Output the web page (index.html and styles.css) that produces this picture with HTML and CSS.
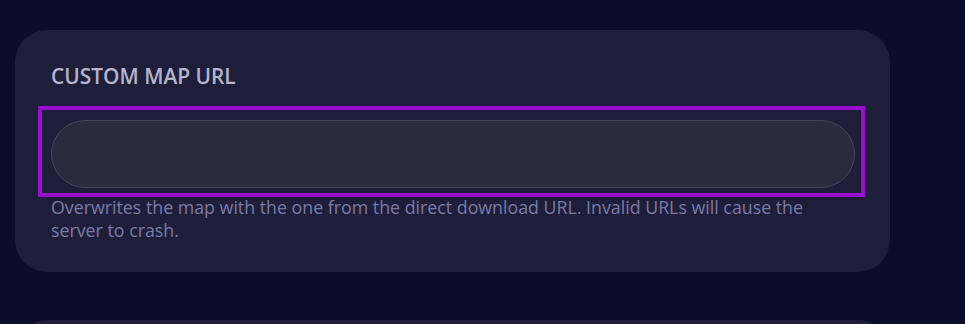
FILE: index.html
```html
<!DOCTYPE html>
<html lang="en">
<head>
<meta charset="utf-8">
<title>Custom Map URL</title>
<link rel="stylesheet" href="styles.css">
</head>
<body>
<main class="page">
  <section class="card">
    <label class="label" for="map-url">CUSTOM MAP URL</label>
    <div class="field">
      <input id="map-url" class="input" type="text">
      <div class="highlight"></div>
    </div>
    <p class="hint">Overwrites the map with the one from the direct download URL. Invalid URLs will cause the server to crash.</p>
  </section>
  <section class="card card-next"></section>
</main>
</body>
</html>
```

FILE: styles.css
```css
html, body {
  margin: 0;
  padding: 0;
  background: #0c0c2b;
  height: 100%;
  overflow: hidden;
}
.page {
  display: flex;
  flex-direction: column;
  gap: 48px;
  padding: 30px 0 0 15px;
  font-family: "Open Sans", "Noto Sans", sans-serif;
}
.card {
  width: 875px;
  box-sizing: border-box;
  background: #1e1e3a;
  border-radius: 32px;
  padding: 34px 36px 30px 36px;
  display: flex;
  flex-direction: column;
}
.card-next {
  height: 120px;
}
.label {
  color: #b4b4cc;
  font-size: 20.9px;
  font-weight: 600;
  line-height: 24px;
}
.field {
  position: relative;
  margin-top: 32px;
}
.input {
  display: block;
  width: 804px;
  height: 68px;
  box-sizing: border-box;
  background: #2b2b40;
  border: 1px solid #45455c;
  border-radius: 34px;
  outline: none;
  padding: 0 24px;
  color: #c8c8dc;
  font-family: inherit;
  font-size: 16px;
}
.highlight {
  position: absolute;
  left: -13px;
  top: -14px;
  width: 827px;
  height: 91px;
  box-sizing: border-box;
  border: 4px solid #9a0fcf;
  pointer-events: none;
}
.hint {
  margin: 8px 0 0 0;
  color: #7a7aa8;
  font-size: 17.8px;
  line-height: 23px;
  max-width: 790px;
}
```
